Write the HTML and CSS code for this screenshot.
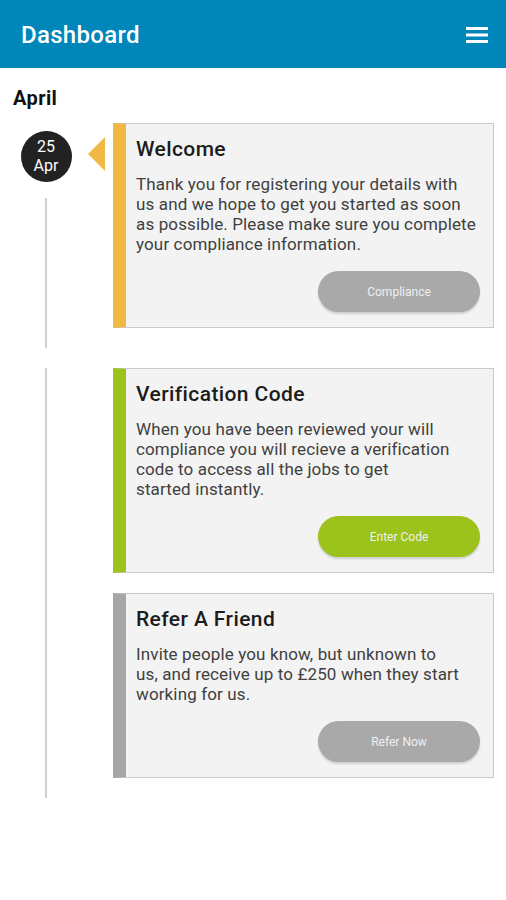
FILE: index.html
```html
<!DOCTYPE html>
<html>
<head>
<meta charset="utf-8">
<link rel="stylesheet" href="styles.css">
</head>
<body>
<header class="topbar">
  <h1 class="title">Dashboard</h1>
  <svg class="menu" width="22" height="18" viewBox="0 0 22 18"><rect x="0" y="1" width="22" height="3" fill="#fff"/><rect x="0" y="7.5" width="22" height="3" fill="#fff"/><rect x="0" y="14" width="22" height="3" fill="#fff"/></svg>
</header>
<main class="content">
  <h2 class="month">April</h2>
  <section class="group">
    <div class="rail">
      <div class="date">25<br>Apr</div>
      <div class="line"></div>
    </div>
    <div class="cards">
      <article class="card yellow">
        <span class="pointer"></span>
        <h3 class="card-title">Welcome</h3>
        <p class="card-text">Thank you for registering your details with<br>us and we hope to get you started as soon<br>as possible. Please make sure you complete<br>your compliance information.</p>
        <div class="actions"><button class="btn grey">Compliance</button></div>
      </article>
    </div>
  </section>
  <section class="group">
    <div class="rail">
      <div class="line"></div>
    </div>
    <div class="cards">
      <article class="card green">
        <h3 class="card-title">Verification Code</h3>
        <p class="card-text">When you have been reviewed your will<br>compliance you will recieve a verification<br>code to access all the jobs to get<br>started instantly.</p>
        <div class="actions"><button class="btn lime">Enter Code</button></div>
      </article>
      <article class="card greybar">
        <h3 class="card-title">Refer A Friend</h3>
        <p class="card-text">Invite people you know, but unknown to<br>us, and receive up to £250 when they start<br>working for us.</p>
        <div class="actions"><button class="btn grey">Refer Now</button></div>
      </article>
    </div>
  </section>
</main>
</body>
</html>
```
FILE: styles.css
```css
* { box-sizing: border-box; }
body {
  margin: 0;
  font-family: Roboto, "Liberation Sans", Arial, sans-serif;
  background: #fff;
  color: #222;
}
.topbar {
  height: 68px;
  background: #0086b9;
  display: flex;
  align-items: center;
  justify-content: space-between;
  padding: 2px 18px 0 21px;
}
.title {
  margin: 0;
  color: #fff;
  font-size: 24px;
  font-weight: 500;
  letter-spacing: 0.3px;
}
.menu { display: block; }
.content {
  padding: 0 12px 0 0;
}
.month {
  margin: 0;
  padding: 18px 0 0 13px;
  height: 55px;
  font-size: 20px;
  font-weight: 700;
  letter-spacing: 0.4px;
  color: #111;
}
.group {
  display: grid;
  grid-template-columns: 92px 1fr;
  column-gap: 21px;
  margin-bottom: 20px;
}
.rail {
  display: flex;
  flex-direction: column;
  align-items: center;
}
.date {
  margin-top: 8px;
  width: 51px;
  height: 51px;
  border-radius: 50%;
  background: #222;
  color: #fff;
  font-size: 16px;
  line-height: 19px;
  text-align: center;
  padding-top: 6px;
  margin-bottom: 16px;
}
.line {
  flex: 1;
  width: 2px;
  background: #cfcfcf;
}
.cards {
  display: flex;
  flex-direction: column;
  gap: 20px;
  padding-bottom: 20px;
}
.card {
  position: relative;
  background: #f3f3f3;
  border: 1px solid #c9c9c9;
  border-left: 13px solid #f2b844;
  padding: 12px 10px 15px 10px;
}
.card.yellow { border-left-color: #f2b844; }
.card.green { border-left-color: #9bc31c; }
.card.greybar { border-left-color: #a6a6a6; }
.pointer {
  position: absolute;
  left: -38px;
  top: 13px;
  width: 0;
  height: 0;
  border-top: 17px solid transparent;
  border-bottom: 17px solid transparent;
  border-right: 17px solid #f2b844;
}
.card-title {
  margin: 0;
  font-size: 21px;
  line-height: 26px;
  font-weight: 500;
  letter-spacing: 0.4px;
  color: #1c1c1c;
}
.card-text {
  margin: 12px 0 0;
  font-size: 17px;
  line-height: 20px;
  letter-spacing: 0.13px;
  white-space: nowrap;
  color: #404040;
}
.actions {
  display: flex;
  justify-content: flex-end;
  margin-top: 17px;
  padding-right: 3px;
}
.btn {
  width: 162px;
  height: 41px;
  border: none;
  border-radius: 21px;
  font-family: Roboto, "Liberation Sans", Arial, sans-serif;
  font-size: 12px;
  color: #f0f0f0;
  box-shadow: 0 2px 2px rgba(0,0,0,0.15);
}
.btn.grey { background: #a9a9a9; }
.btn.lime { background: #9bc31c; }
```
